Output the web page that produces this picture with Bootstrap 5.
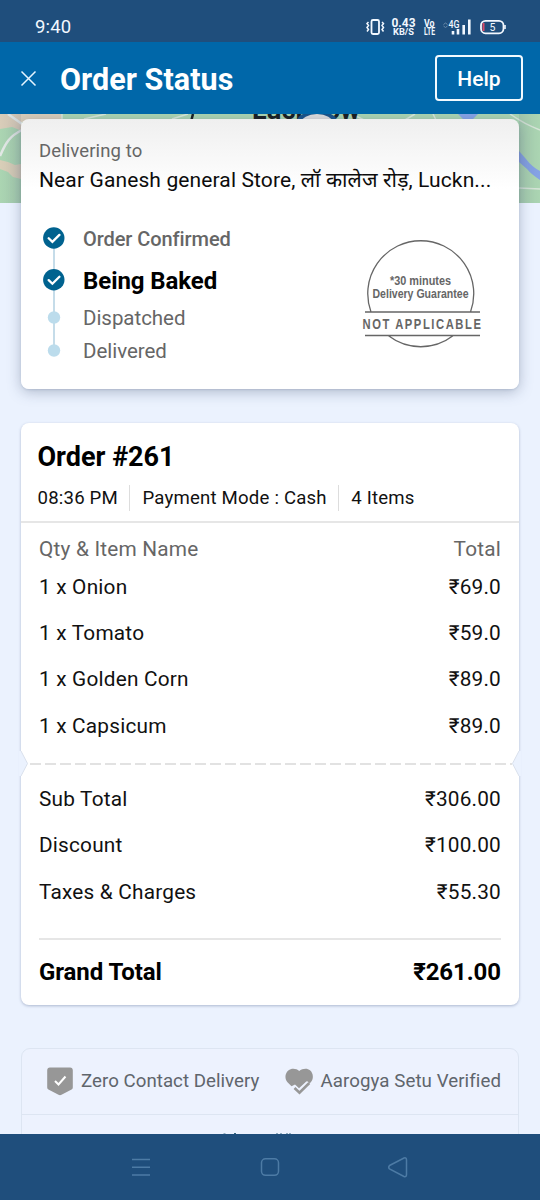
<!DOCTYPE html>
<html lang="en">
<head>
<meta charset="utf-8">
<meta name="viewport" content="width=device-width, initial-scale=1">
<title>Order Status</title>
<link rel="stylesheet" href="https://cdn.jsdelivr.net/npm/bootstrap@5.3.0/dist/css/bootstrap.min.css">
<style>
body{font-family:Roboto,"Noto Sans",sans-serif;color:#111;background:#ebf2fe;height:1200px;overflow:hidden;line-height:1.2}
svg{display:block;flex:none}
.status{height:42px;background:#1f4e7c;color:#f2f8ff;padding:11px 33px 0 35px}
.clock{font-size:18.5px;line-height:32px;letter-spacing:.2px}
.topbar{height:72px;background:#0067a9;padding:0 17px 0 20px}
.topbar h1{font-size:30.5px;font-weight:700;letter-spacing:.05px;line-height:40px;padding-top:4px;margin-left:23px}
.help{width:88px;height:46px;border:2px solid #f2faff;border-radius:4px;color:#fff;font-size:21px;font-weight:500;padding:0;line-height:44px}
.screen{height:1020px}
.map{top:0;left:0}
.sheet{margin:0 21px;border:0;border-radius:8px;--bs-card-color:#111}
.delivery{margin-top:5px;height:269.5px;padding:20px 18px 19px;background:linear-gradient(#efefef,#fff 70px);box-shadow:0 3px 14px rgba(70,85,120,.36),0 1px 2px rgba(70,85,120,.15)}
.muted{color:#666}
.to{font-size:18.5px;letter-spacing:.1px;line-height:25px}
.addr{font-size:21px;letter-spacing:.12px;line-height:33px;color:#0c0c0c;height:33px}
.steps{font-size:20.5px;letter-spacing:-.04px;padding:21px 0 0 17px}
.steps div{display:flex;align-items:center;height:33px}
.steps .done,.steps .current{height:42px;font-weight:500;letter-spacing:-.07px;font-size:20px}
.steps .current{font-weight:700;font-size:24px;color:#000}
.track{margin:21px 0 0 3px}
.stamp{margin:43px 18px 0 0}
.order{margin-top:34.5px;height:582px;box-shadow:0 1px 3px rgba(80,100,140,.4)}
.order h2{font-size:27px;font-weight:700;line-height:34px;margin:17px 17px 0 16.5px;color:#000}
.meta{font-size:18.6px;letter-spacing:.2px;line-height:26px;margin:11px 17px 10px 16.5px}
.meta span+span{border-left:1px solid #ddd;margin-left:11.5px;padding-left:12px}
.rule-x{height:2px;background:#e6e6e6}
.ln{display:flex;justify-content:space-between;align-items:center;height:46.6px;font-size:20.8px;letter-spacing:.2px;padding:0 18px}
.ln.heading{height:28px;margin-top:13px}
.tear{height:23px;margin:2.5px 0 1px}
.tear::before{content:"";display:block;position:absolute;left:9px;right:7px;top:10.5px;height:2px;background:repeating-linear-gradient(90deg,#e2e2e2 0 11.5px,transparent 11.5px 15px)}
.nt{position:absolute;top:-1px}
.ln.total{font-size:24px;font-weight:700;letter-spacing:-.08px;color:#000;height:65px}
.safe{margin:42.5px 21px 0;height:100px;border:1.5px solid #dde5f2;border-radius:9px;background:#edf2fe;font-size:18.7px;letter-spacing:.03px;color:#5f656c}
.safe-row{height:66px;border-bottom:1.5px solid #dde5f2;padding:0 17px 0 25px}
.sysnav{height:66px;background:#1f4e7c}
</style>
</head>
<body>
<div class="status d-flex justify-content-between">
  <span class="clock">9:40</span>
  <svg width="142" height="30" viewBox="365 11 142 30" fill="none" stroke="#f2f8ff" font-family="Roboto, sans-serif">
    <rect x="371.500" y="20" width="7.500" height="14" rx="1.500" stroke-width="1.800"/>
    <path d="M368.500 22l-1.500 1.500 1.500 2-1.500 2 1.500 2-1.500 2M382 22l1.500 1.500-1.500 2 1.500 2-1.500 2 1.500 2" stroke-width="1.500"/>
    <g fill="#f2f8ff" stroke="none" font-weight="700">
      <text x="391.500" y="26.500" font-size="12" textLength="24" lengthAdjust="spacingAndGlyphs">0.43</text>
      <text x="393" y="35.300" font-size="9" textLength="21" lengthAdjust="spacingAndGlyphs">KB/S</text>
      <text x="424" y="26.500" font-size="10" textLength="10.500" lengthAdjust="spacingAndGlyphs">Vo</text>
      <text x="424" y="35.300" font-size="10" textLength="11" lengthAdjust="spacingAndGlyphs">LTE</text>
      <text x="448.500" y="28" font-size="10" font-weight="500" textLength="11" lengthAdjust="spacingAndGlyphs">4G</text>
    </g>
    <path d="M443.500 24.500l2-1.500 2 1.500M443.500 26l2 1.500 2-1.500" stroke="#6a8aa9" stroke-width="1"/>
    <path d="M453 31v3.500M458 29v5.500M463.700 25v9.500M469.300 19.500v15" stroke-width="2.600"/>
    <rect x="481" y="20.800" width="22.500" height="12.500" rx="4.500" stroke-width="1.800"/>
    <path d="M505 25v4" stroke-width="1.600"/>
    <path d="M483.500 23v8" stroke="#d84a68" stroke-width="2"/>
    <text x="489.500" y="31" font-size="10.500" fill="#f2f8ff" stroke="none">5</text>
  </svg>
</div>
<header class="topbar d-flex align-items-center text-white">
  <svg width="17" height="17" viewBox="0 0 17 17"><path d="M1.500 1.500l14 14M15.500 1.500l-14 14" stroke="#e6f5ff" stroke-width="1.500"/></svg>
  <h1 class="mb-0 me-auto">Order Status</h1>
  <button type="button" class="btn help">Help</button>
</header>
<main class="screen position-relative overflow-hidden">
  <svg class="map position-absolute" width="540" height="89" viewBox="0 0 540 89">
    <defs><linearGradient id="fade" x1="0" y1="0" x2="1" y2="0"><stop offset="0" stop-color="#557" stop-opacity="0"/><stop offset="1" stop-color="#557" stop-opacity=".12"/></linearGradient></defs>
    <rect width="540" height="89" fill="#abd5b2"/>
    <path d="M0 0h62v8H22v9L12 13 0 15z" fill="#d9cdb9"/>
    <path d="M0 46l8 2 7 3 6-1v15l-8-2-5-5-8-3z" fill="#d9cfb8"/>
    <path d="M0 42C6 28 10 22 22 16M8 0l14 10" stroke="#e3e9e6" stroke-width="2.500" fill="none"/>
    <path d="M62 0v6M84 5l22-5M172 5l16-5M352 0l12 6M405 6l10-6M433 0l3 6M510 0q14 10 30 16M519 74l21 1" stroke="#d8e7d9" stroke-width="1.500" fill="none"/>
    <path d="M458 0h20l-6 6h-8zM519 37l7 8q6 8 14 12v9q-9-6-13-11l-8-7z" fill="#85a3e6"/>
    <text x="252" y="5" font-size="25" font-weight="700" fill="#161c20" textLength="108" lengthAdjust="spacingAndGlyphs">Lucknow</text>
    <path d="M193 0l-1.500 6" stroke="#161c20" stroke-width="2.500"/>
    <ellipse cx="317" cy="9" rx="21" ry="12" fill="#16528a"/><ellipse cx="317" cy="9" rx="16" ry="9" fill="#ddd"/>
    <path d="M0 0h21v89H0z" fill="url(#fade)"/><path d="M0 0h21v89H0z" fill="url(#fade)" transform="translate(540) scale(-1 1)"/>
  </svg>

  <section class="card sheet delivery">
    <div class="to muted">Delivering to</div>
    <div class="addr text-nowrap">Near Ganesh general Store, लॉ कालेज रोड़, Luckn...</div>
    <div class="d-flex align-items-start">
      <svg class="track" width="24" height="150" viewBox="42 218 24 150">
        <path d="M54 240v110" stroke="#c5dce9" stroke-width="2"/>
        <g fill="#00628f"><circle cx="53.800" cy="238" r="10.700"/><circle cx="53.800" cy="279.800" r="10.700"/></g>
        <path d="M48.700 238.300l3.700 3.600 7-7M48.700 280.100l3.700 3.600 7-7" fill="none" stroke="#fff" stroke-width="2.300" stroke-linecap="round"/>
        <g fill="#bcdcec"><circle cx="54" cy="317.500" r="6.200"/><circle cx="54" cy="350.500" r="6.200"/></g>
      </svg>
      <div class="steps muted me-auto">
        <div class="done">Order Confirmed</div>
        <div class="current">Being Baked</div>
        <div>Dispatched</div>
        <div>Delivered</div>
      </div>
      <svg class="stamp" width="122" height="114" viewBox="361 240 122 114" font-family="'Liberation Sans Narrow','Liberation Sans',sans-serif" font-weight="700" fill="#666">
        <path d="M371 312A53 53 0 1 1 470.500 312M388.500 335.800A53 53 0 0 0 453 335.800M365 312h115M365 335.500h115" fill="none" stroke="#666" stroke-width="1.300"/>
        <text x="390" y="285" font-size="12.500" textLength="61" lengthAdjust="spacingAndGlyphs">*30 minutes</text>
        <text x="372.500" y="298.200" font-size="12.500" textLength="96" lengthAdjust="spacingAndGlyphs">Delivery Guarantee</text>
        <g transform="translate(362.500 328.800) scale(.8 1)"><text font-size="14" textLength="148" lengthAdjust="spacing">NOT APPLICABLE</text></g>
      </svg>
    </div>
  </section>

  <section class="card sheet order">
    <h2>Order #261</h2>
    <div class="meta d-flex"><span>08:36 PM</span><span>Payment Mode : Cash</span><span>4 Items</span></div>
    <div class="rule-x"></div>
    <div class="ln heading muted"><span>Qty &amp; Item Name</span><span>Total</span></div>
    <div class="ln"><span>1 x Onion</span><span>₹69.0</span></div>
    <div class="ln"><span>1 x Tomato</span><span>₹59.0</span></div>
    <div class="ln"><span>1 x Golden Corn</span><span>₹89.0</span></div>
    <div class="ln"><span>1 x Capsicum</span><span>₹89.0</span></div>
    <div class="tear position-relative">
      <svg class="nt" style="left:-2px" width="9" height="25"><path d="M0 0h2l6.500 12.500L2 25H0z" fill="#ebf2fe"/><path d="M2 0l6.500 12.500L2 25" fill="none" stroke="#d9e0ec" stroke-width="1"/></svg>
      <svg class="nt" style="right:-2px" width="9" height="25"><path d="M9 0H7L.5 12.500 7 25h2z" fill="#ebf2fe"/><path d="M7 0L.5 12.500 7 25" fill="none" stroke="#d9e0ec" stroke-width="1"/></svg>
    </div>
    <div class="ln"><span>Sub Total</span><span>₹306.00</span></div>
    <div class="ln"><span>Discount</span><span>₹100.00</span></div>
    <div class="ln"><span>Taxes &amp; Charges</span><span>₹55.30</span></div>
    <div class="rule-x" style="margin:23px 18px 0"></div>
    <div class="ln total"><span>Grand Total</span><span>₹261.00</span></div>
  </section>

  <section class="safe">
    <div class="safe-row d-flex align-items-center justify-content-between">
      <div class="d-flex align-items-center">
        <svg width="26" height="29" viewBox="0 0 26 29"><path d="M3 .500h20Q25.800 .500 25.800 3.500V20.500q0 1.300-1.200 2L14.500 27.800q-1.500.8-3 0L1.400 22.500Q.200 21.800.200 20.500V3.500Q.200.500 3 .500z" fill="#979797"/><path d="M8 14l3.500 3.500 7-8" fill="none" stroke="#fff" stroke-width="2"/></svg>
        <span class="ms-2">Zero Contact Delivery</span>
      </div>
      <div class="d-flex align-items-center">
        <svg width="29" height="27" viewBox="0 0 29 27"><path d="M14.200 3C11.500.300 6.500-.300 3.300 2.500c-3.500 3-3.800 8.500-.8 11.800L6.500 18.300l3.500-1.800 4 3.700 7.500-7 3 2.300 1.300-1.200c3-3.500 2.700-9-.8-12C22.500-.300 17.200.300 14.200 3z" fill="#979797"/><path d="M9.500 20l5 4.700 9.800-9.700" fill="none" stroke="#edf2fe" stroke-width="5"/><path d="M9.500 20l5 4.700 9.800-9.700" fill="none" stroke="#979797" stroke-width="2.600"/></svg>
        <span style="margin-left:7px;letter-spacing:.07px">Aarogya Setu Verified</span>
      </div>
    </div>
    <svg class="mx-auto" width="96" height="20" viewBox="222 1114 96 20"><path d="M224.500 1132.500v2M235 1132v2M277 1132.500v2M281 1132.500v2M287 1132.500v2M290 1132.500v2" stroke="#33657f" stroke-width="2"/></svg>
  </section>
</main>
<nav class="sysnav">
  <svg width="540" height="66" viewBox="0 0 540 66" fill="none" stroke="#4d7ba5" stroke-width="1.500">
    <path d="M132 25.500h18M132 33.300h18M132 41h18"/>
    <rect x="261.500" y="24.800" width="17" height="16.500" rx="4"/>
    <path d="M389.500 31.500L404 24q2.500-.8 2.500 2v14.500q0 2.800-2.500 2L389.500 35q-1.600-1.700 0-3.500z"/>
  </svg>
</nav>
<script src="https://cdn.jsdelivr.net/npm/bootstrap@5.3.0/dist/js/bootstrap.bundle.min.js"></script>
</body>
</html>
